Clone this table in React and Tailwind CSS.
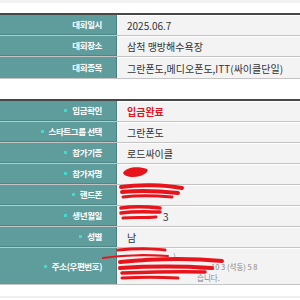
import React from "react";

const font = { fontFamily: '"Noto Sans CJK KR", "Noto Sans", sans-serif' };

function Row({ label, value, bullet, h = "h-[21px]", red, last }) {
  return (
    <div className={`flex ${h} ${last ? "" : "border-b border-b-[#c4c4c4]"}`}>
      <div className={`w-[117px] shrink-0 bg-[#5f9c9c] flex items-center justify-end pr-[14px] text-white text-[8.5px] font-bold tracking-[-0.4px] border-r border-r-[#4b8080] ${last ? "" : "border-b border-b-[#4f8787]"}`}>
        {bullet && <span className="w-[3px] h-[3px] bg-[#46d8cc] mr-[5px] inline-block" />}
        {label}
      </div>
      <div className={`flex-1 bg-[#f3f3f3] flex items-center pl-[10px] text-[10px] border-t border-t-white ${red ? "text-[#e0161b] font-bold" : "text-[#333]"}`}>
        {value}
      </div>
    </div>
  );
}

export default function App() {
  return (
    <div className="w-[300px] h-[300px] bg-white relative overflow-hidden" style={font}>
      <div className="h-[3px] bg-[#f2f2f2]" />
      <div className="h-[10px]" />
      <div className="border-t-2 border-t-[#474747] border-b border-b-[#c4c4c4]">
        <Row label="대회일시" value="2025.06.7" />
        <Row label="대회장소" value="삼척 맹방해수욕장" />
        <Row label="대회종목" value="그란폰도,메디오폰도,ITT(싸이클단일)" last />
      </div>
      <div className="h-[20px]" />
      <div className="border-t-2 border-t-[#474747] border-b border-b-[#c4c4c4]">
        <Row bullet label="입금확인" value="입금완료" red />
        <Row bullet label="스타트그룹 선택" value="그란폰도" />
        <Row bullet label="참가기종" value="로드싸이클" />
        <Row bullet label="참가자명" value="" />
        <Row bullet label="핸드폰" value="" />
        <Row bullet label="생년월일" value={<span className="pl-[36px]">3</span>} />
        <Row bullet label="성별" value="남" />
        <Row bullet label="주소(우편번호)" h="h-[36px]" value={
          <div className="w-full flex flex-col leading-[11px] text-[7.5px] text-[#888]">
            <span className="ml-[40px]">...)</span>
            <span className="ml-[72px]">..... 10 3 (석동) 5 8</span>
            <span className="ml-[70px]">습니다.</span>
          </div>
        } last />
      </div>
      <div className="absolute left-0 right-0 bottom-[2px] h-[2px] bg-[#f0f0f0]" />

      <svg className="absolute left-0 top-0 pointer-events-none" width="300" height="300" viewBox="0 0 300 300">
        <g fill="#e8141c" stroke="none">
          <path d="M123 173 C126 167, 138 166, 147 169 C149 171, 146 174, 140 176 C133 178, 125 177, 123 173 Z" />
        </g>
        <g fill="none" stroke="#e8141c" strokeLinecap="round">
          <path d="M121 187 C140 184, 165 185, 182 188" strokeWidth="4" />
          <path d="M122 192 C140 190, 160 191, 178 193" strokeWidth="4" />
          <path d="M123 197 C140 195, 160 196, 172 197" strokeWidth="3" />
          <path d="M121 208 C135 206, 150 207, 160 208" strokeWidth="3.5" />
          <path d="M121 213 C135 211, 150 212, 160 212" strokeWidth="3.5" />
          <path d="M123 218 C133 217, 145 218, 156 217" strokeWidth="3" />
          <path d="M118 250 C140 248, 160 249, 165 250" strokeWidth="3" />
          <path d="M103 258 C130 254, 150 255, 168 256" strokeWidth="2" />
          <path d="M120 262 C160 258, 200 259, 222 261" strokeWidth="4" />
          <path d="M120 268 C150 266, 180 266, 212 268" strokeWidth="4" />
          <path d="M122 273 C150 272, 180 271, 205 272" strokeWidth="3.5" />
          <path d="M122 278 C140 277, 160 277, 178 278" strokeWidth="3" />
        </g>
      </svg>
    </div>
  );
}
